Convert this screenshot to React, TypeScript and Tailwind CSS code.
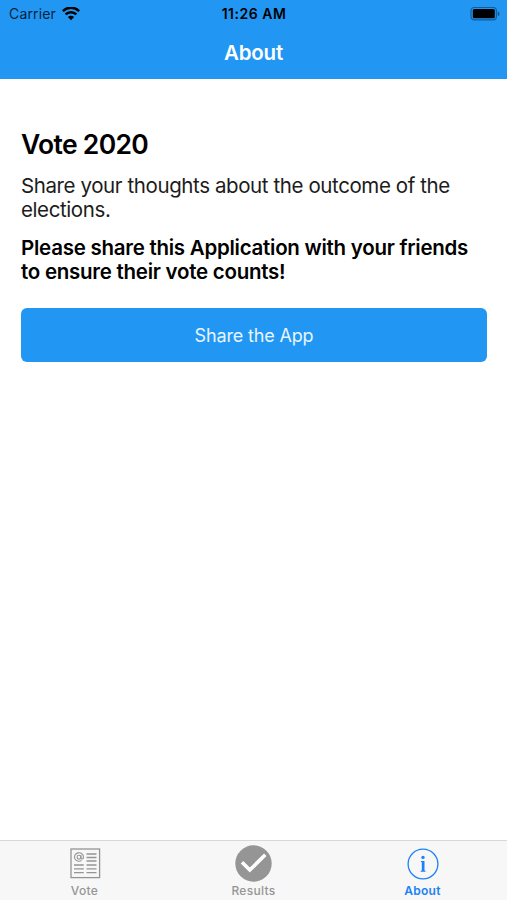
import React, { useState } from 'react';

type TabId = 'vote' | 'results' | 'about';

// Status bar icons
const WifiIcon = () => (
  <svg width="18" height="14" viewBox="0 0 18 14" fill="none" stroke="#000" strokeWidth="2.5">
    <path d="M0.8 4.1a11.6 11.6 0 0 1 16.4 0" />
    <path d="M3.6 7.4a7.6 7.6 0 0 1 10.8 0" />
    <path d="M9 13.2L5.9 10.1a4.4 4.4 0 0 1 6.2 0z" fill="#000" stroke="none" />
  </svg>
);

const BatteryIcon = () => (
  <svg width="31" height="14" viewBox="0 0 31 14">
    <rect x="1" y="0.5" width="25.4" height="12.4" rx="3.4" fill="none" stroke="#000" strokeOpacity="0.38" strokeWidth="1.2" />
    <rect x="2.8" y="2.1" width="22" height="9.2" rx="1.5" fill="#000" />
    <path d="M27.8 4.4v4.6c1-.3 1.7-1.2 1.7-2.3s-.7-2-1.7-2.3z" fill="#000" fillOpacity="0.45" />
  </svg>
);

// Tab bar icons
const VoteIcon = () => (
  <svg width="31" height="31" viewBox="0 0 31 31" fill="none" stroke="currentColor">
    <rect x="1" y="1" width="28.6" height="28.6" strokeWidth="1.3" />
    <path d="M16.5 6h10M16.5 9.5h10M16.5 13h10M4 17h9.8M4 20.8h9.8M4 24.6h9.8M16.5 17h10M16.5 20.8h10M16.5 24.6h10" strokeWidth="1.3" />
    <circle cx="9" cy="9.2" r="1.9" strokeWidth="1.1" />
    <path d="M11 7.2v2.6c0 1.9 2.5 1.5 2.5-.8a4.5 4.2 0 1 0-2 3.500" strokeWidth="1.1" />
  </svg>
);

const ResultsIcon = () => (
  <svg width="37" height="37" viewBox="0 0 37 37" fill="none">
    <circle cx="18.5" cy="18.5" r="18.2" fill="currentColor" />
    <path d="M7 17.200l7.800 7.800L30.300 9.800" stroke="#fff" strokeWidth="3.6" />
  </svg>
);

const AboutIcon = () => (
  <svg width="32" height="32" viewBox="0 0 32 32" fill="none">
    <circle cx="16" cy="16" r="14.9" stroke="currentColor" strokeWidth="1.3" />
    <circle cx="16" cy="9.4" r="1.7" fill="currentColor" />
    <path d="M13.800 13h3.700v9.600l1.100.4v.8h-5v-.8l1.200-.4v-8.300l-1-.5z" fill="currentColor" />
  </svg>
);

const tabs: { id: TabId; label: string; icon: React.ReactNode }[] = [
  { id: 'vote', label: 'Vote', icon: <VoteIcon /> },
  { id: 'results', label: 'Results', icon: <ResultsIcon /> },
  { id: 'about', label: 'About', icon: <AboutIcon /> },
];

export default function App() {
  const [active, setActive] = useState<TabId>('about');

  return (
    <div className="flex h-[900px] w-full flex-col bg-white font-['Inter',sans-serif] text-black">
      {/* Status bar and title */}
      <header className="h-[79px] shrink-0 bg-[#2196f3]">
        <div className="grid h-[27px] grid-cols-[1fr_auto_1fr] items-center pr-[6px] pl-[9px]">
          <div className="flex items-center gap-[6px]">
            <span className="text-[14px] tracking-[0.15px] text-black/80">Carrier</span>
            <WifiIcon />
          </div>
          <span className="-ml-[2px] text-center text-[14px] font-semibold tracking-[0.5px]">11:26 AM</span>
          <div className="flex justify-end">
            <BatteryIcon />
          </div>
        </div>
        <h1 className="pt-[11.5px] text-center text-[20.5px] leading-[28px] font-semibold tracking-[-0.2px] text-white">
          About
        </h1>
      </header>

      {/* Content */}
      <main className="flex-1 pt-[49px] pr-[20px] pl-[21px]">
        <h2 className="text-[26.5px] leading-[32px] font-semibold tracking-[-0.7px]">Vote 2020</h2>
        <p className="mt-[13.5px] text-[20.5px] leading-[24.5px] tracking-[-0.4px] text-[#1c1c1c]">
          Share your thoughts about the outcome of the
          <br />
          elections.
        </p>
        <p className="mt-[13px] text-[20.5px] leading-[24.5px] font-semibold tracking-[-0.26px]">
          Please share this Application with your friends
          <br />
          to ensure their vote counts!
        </p>
        <button
          type="button"
          className="mt-[23.5px] block h-[54px] w-full rounded-[6px] bg-[#2196f3] text-[18px] tracking-[-0.15px] text-white/90"
        >
          Share the App
        </button>
      </main>

      {/* Tab bar */}
      <nav className="grid h-[60px] shrink-0 grid-cols-3 border-t border-[#d8d8d8] bg-[#f7f7f7]">
        {tabs.map((tab) => (
          <button
            key={tab.id}
            type="button"
            onClick={() => setActive(tab.id)}
            className={`flex flex-col items-center ${tab.id === active ? 'font-semibold text-[#1b82f5]' : 'font-medium text-[#959595]'}`}
          >
            <span className={`flex h-[45px] items-center ${tab.id === 'vote' ? 'pl-px' : ''}`}>{tab.icon}</span>
            <span className="-mt-px text-[12px] leading-[12px] tracking-[0.3px]">{tab.label}</span>
          </button>
        ))}
      </nav>
    </div>
  );
}
